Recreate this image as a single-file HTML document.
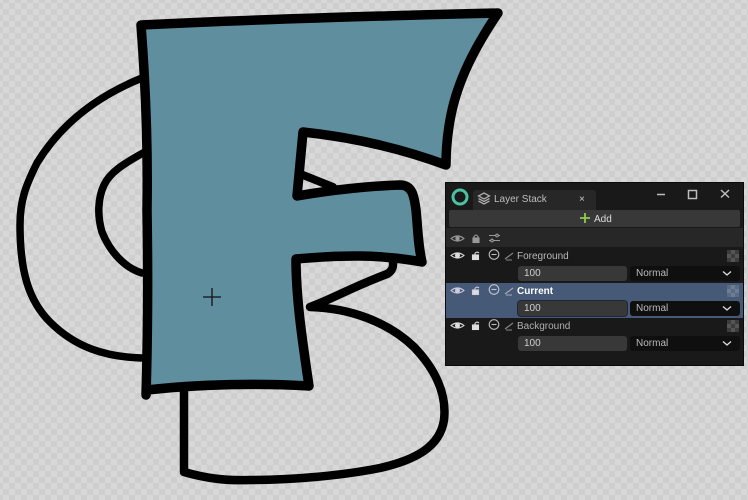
<!DOCTYPE html>
<html><head><meta charset="utf-8"><style>
html,body{margin:0;padding:0;background:#d2d2d2}
#r{position:relative;width:748px;height:500px;overflow:hidden;background-color:#d8d8d8;background-image:conic-gradient(#cecece 25%,transparent 0 50%,#cecece 0 75%,transparent 0);background-size:12px 12px;background-position:3px 3px}
svg{position:absolute;left:0;top:0}
#p{position:absolute;left:446px;top:183px;width:297px;height:182px;background:#191919;box-shadow:0 0 0 1px #0a0a0a;font:10px "Liberation Sans",sans-serif;color:#c4c4c4;overflow:hidden}
#p div{position:absolute;box-sizing:border-box}
.t{white-space:nowrap;line-height:12px}
.i{background:#383838;border-radius:3px;height:15px;width:109px;left:72px;padding-left:6px;line-height:16px;color:#d0d0d0}
.s{background:#0f0f0f;border-radius:3px;height:15px;width:110px;left:184px;padding-left:6px;line-height:16px;color:#bbb}
</style></head><body><div id="r">
<svg width="748" height="500" viewBox="0 0 748 500" fill="none" stroke="#000" stroke-linecap="round" stroke-linejoin="round">
<path stroke-width="7.500" d="M142 78C100 95 62 122 37 163C26 185 20 200 20 225C20 270 28 300 50 322C75 347 105 357 142 358"/>
<path stroke-width="7.500" d="M143 153C125 163 110 172 104 185C98 198 97 215 102 232C110 252 125 268 142 273"/>
<path stroke-width="8" d="M303 175L333 187"/>
<path stroke-width="8.500" d="M184 390L184 472C205 478 225 481 250 480C290 480 340 476 380 468C415 460 440 447 444 420C447 395 436 370 414 347C388 322 350 308 310 307C330 300 350 288 387 274C394 270 394 264 392 257"/>
<path fill="#5f8f9f" stroke-width="9.500" d="M141 25C260 19 380 16 498 13C475 47 458 80 451 115C447 135 446 150 446 165C400 148 350 137 303 132L297 196C330 190 370 186 400 185C412 185 414 195 416 210C418 230 418 245 422 262C380 254 340 255 296 259C296 300 303 345 309 386C260 383 200 384 147 390L146 395C148 330 148 270 147 210C148 150 146 90 141 25Z"/>
<path stroke="#111" stroke-width="1.300" stroke-linecap="butt" d="M203 297H221M212 288V306"/>
</svg>
<div id="p">
<div style="left:3px;top:27px;width:291px;height:17px;background:#383838;border-radius:2px"></div>
<div style="left:0;top:45px;width:297px;height:19px;background:#272727"></div>
<div style="left:27px;top:7px;width:123px;height:20px;background:#272727;border-radius:3px 3px 0 0"></div>
<div class="t" style="left:48px;top:11px;color:#bdbdbd">Layer Stack</div>
<div class="t" style="left:133px;top:11px;color:#ccc">×</div>
<div class="t" style="left:148px;top:28px;line-height:17px;color:#ddd">Add</div>
<div style="left:0;top:100px;width:297px;height:35px;background:#465a78"></div>
<div class="t" style="left:71px;top:68px;color:#b8b8b8">Foreground</div>
<div class="t" style="left:71px;top:103px;color:#fff;font-weight:bold">Current</div>
<div class="t" style="left:71px;top:138px;color:#b0b0b0">Background</div>
<div class="i" style="top:83px">100</div><div class="s" style="top:83px">Normal</div>
<div class="i" style="top:118px;box-shadow:0 0 0 1px #1c2838">100</div><div class="s" style="top:118px">Normal</div>
<div class="i" style="top:153px">100</div><div class="s" style="top:153px">Normal</div>
</div>
<svg width="748" height="500" viewBox="0 0 748 500" fill="none">
<circle cx="460" cy="197" r="7" stroke="#4cc0a0" stroke-width="3"/>
<path stroke="#aaa" stroke-width="1.300" d="M484 193l5.500 3-5.500 3-5.500-3zM478.500 198.500l5.500 3 5.500-3M478.500 201l5.500 3 5.500-3"/>
<path stroke="#bbb" stroke-width="1.500" d="M657 194.500h8M688.500 190.500h8v8h-8zM721 190l8 7.500M729 190l-8 7.500"/>
<path stroke="#8fcb50" stroke-width="1.800" d="M580 218h10M585 213v10"/>
<g stroke="#999" stroke-width="1.100">
<path d="M451 238.500q6.500-5 13 0q-6.500 5-13 0z"/><circle cx="457.500" cy="238.500" r="1.700" fill="#999"/>
<rect x="473" y="238" width="6" height="4.500" fill="#999"/><path d="M474 238v-1.500q2-3 4 0v1.500"/>
<path d="M489 235.500h11M489 240.500h11"/><circle cx="497" cy="235.500" r="1.300" fill="#272727"/><circle cx="492" cy="240.500" r="1.300" fill="#272727"/>
</g>
<g stroke="#ddd" stroke-width="1.100">
<path d="M451 255.500q6.500-5 13 0q-6.500 5-13 0z"/><circle cx="457.500" cy="255.500" r="2" fill="#ddd"/>
<rect x="472.500" y="255" width="6" height="4.500" fill="#ddd"/><path d="M475 255v-1.500q1.500-2.500 4-.5"/>
<circle cx="494" cy="254.500" r="4.800" stroke="#bbb"/><path d="M491.500 254.500h5" stroke="#bbb"/>
<path d="M505 259l8-6M506 260h6" stroke="#888"/>
</g>
<g stroke="#ccd" stroke-width="1.100">
<path d="M451 290.500q6.500-5 13 0q-6.500 5-13 0z"/><circle cx="457.500" cy="290.500" r="2" fill="#ccd"/>
<rect x="472.500" y="290" width="6" height="4.500" fill="#ddd"/><path d="M475 290v-1.500q1.500-2.500 4-.5"/>
<circle cx="494" cy="289.500" r="4.800" stroke="#bcc6d4"/><path d="M491.500 289.500h5" stroke="#bcc6d4"/>
<path d="M505 294l8-6M506 295h6" stroke="#aab"/>
</g>
<g stroke="#ddd" stroke-width="1.100">
<path d="M451 325.500q6.500-5 13 0q-6.500 5-13 0z"/><circle cx="457.500" cy="325.500" r="2" fill="#ddd"/>
<rect x="472.500" y="325" width="6" height="4.500" fill="#ddd"/><path d="M475 325v-1.500q1.500-2.500 4-.5"/>
<circle cx="494" cy="324.500" r="4.800" stroke="#bbb"/><path d="M491.500 324.500h5" stroke="#bbb"/>
<path d="M505 329l8-6M506 330h6" stroke="#888"/>
</g>
<g stroke="#ddd" stroke-width="1.300"><path d="M723 271.500l4 3.500 4-3.500M723 306.500l4 3.500 4-3.500M723 341.500l4 3.500 4-3.500"/></g>
<g stroke="none">
<rect x="727" y="250" width="12" height="12" fill="#555"/><path fill="#3c3c3c" d="M727 250h4v4h-4zM735 250h4v4h-4zM731 254h4v4h-4zM727 258h4v4h-4zM735 258h4v4h-4z"/>
<rect x="727" y="285" width="12" height="12" fill="#6d7d94"/><path fill="#5a6b84" d="M727 285h4v4h-4zM735 285h4v4h-4zM731 289h4v4h-4zM727 293h4v4h-4zM735 293h4v4h-4z"/>
<rect x="727" y="320" width="12" height="12" fill="#555"/><path fill="#3c3c3c" d="M727 320h4v4h-4zM735 320h4v4h-4zM731 324h4v4h-4zM727 328h4v4h-4zM735 328h4v4h-4z"/>
</g>
</svg>
</div></body></html>
